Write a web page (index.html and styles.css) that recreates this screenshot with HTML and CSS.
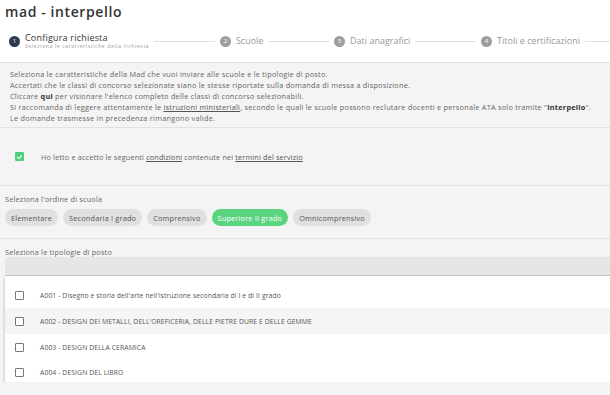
FILE: index.html
```html
<!DOCTYPE html>
<html lang="it">
<head>
    <meta charset="UTF-8">
    <meta name="viewport" content="width=device-width, initial-scale=1.0">
    <title>mad - interpello</title>
    <link rel="stylesheet" href="styles.css">
</head>
<body>
    <header class="top">
        <h1>mad - interpello</h1>

        <div class="stepper">
            <div class="step active">
                <span class="step-num">1</span>
                <div class="step-text">
                    <span class="step-label">Configura richiesta</span>
                    <span class="step-sub">Seleziona le caratteristiche della richiesta</span>
                </div>
            </div>
            <div class="step-line"></div>
            <div class="step">
                <span class="step-num">2</span>
                <span class="step-label">Scuole</span>
            </div>
            <div class="step-line"></div>
            <div class="step">
                <span class="step-num">3</span>
                <span class="step-label">Dati anagrafici</span>
            </div>
            <div class="step-line"></div>
            <div class="step">
                <span class="step-num">4</span>
                <span class="step-label">Titoli e certificazioni</span>
            </div>
            <div class="step-line last"></div>
        </div>
    </header>

    <main class="content">
        <section class="info">
            <p>Seleziona le caratteristiche della Mad che vuoi inviare alle scuole e le tipologie di posto.</p>
            <p>Accertati che le classi di concorso selezionate siano le stesse riportate sulla domanda di messa a disposizione.</p>
            <p>Cliccare <b>qui</b> per visionare l'elenco completo delle classi di concorso selezionabili.</p>
            <p>Si raccomanda di leggere attentamente le <a href="#">istruzioni ministeriali</a>, secondo le quali le scuole possono reclutare docenti e personale ATA solo tramite "<b>Interpello</b>".</p>
            <p>Le domande trasmesse in precedenza rimangono valide.</p>
        </section>

        <section class="terms">
            <span class="check on">
                <svg viewBox="0 0 10 10" width="8" height="8"><path d="M2 5.2 L4.2 7.2 L8 2.9" fill="none" stroke="#fff" stroke-width="1.5" stroke-linecap="round" stroke-linejoin="round"/></svg>
            </span>
            <span class="terms-text">Ho letto e accetto le seguenti <a href="#">condizioni</a> contenute nei <a href="#">termini del servizio</a></span>
        </section>

        <section class="order">
            <div class="label">Seleziona l'ordine di scuola</div>
            <div class="chips">
                <span class="chip">Elementare</span>
                <span class="chip">Secondaria I grado</span>
                <span class="chip">Comprensivo</span>
                <span class="chip selected">Superiore II grado</span>
                <span class="chip">Omnicomprensivo</span>
            </div>
        </section>

        <section class="types">
            <div class="label">Seleziona le tipologie di posto</div>
            <div class="search-bar"></div>
            <ul class="list">
                <li><span class="check"></span>A001 - Disegno e storia dell'arte nell'istruzione secondaria di I e di II grado</li>
                <li class="alt"><span class="check"></span>A002 - DESIGN DEI METALLI, DELL'OREFICERIA, DELLE PIETRE DURE E DELLE GEMME</li>
                <li><span class="check"></span>A003 - DESIGN DELLA CERAMICA</li>
                <li class="cut"><span class="check"></span>A004 - DESIGN DEL LIBRO</li>
            </ul>
        </section>
    </main>
</body>
</html>
```

FILE: styles.css
```css
* {
    box-sizing: border-box;
}

body {
    margin: 0;
    background: #f4f4f4;
    color: #666;
    font-family: "Open Sans", "Liberation Sans", sans-serif;
    overflow: hidden;
}

.top {
    background: #fff;
    padding: 5px 0 0 5px;
    height: 62px;
}

h1 {
    margin: 0;
    font-size: 14px;
    font-weight: 600;
    letter-spacing: 0.6px;
    color: #333;
    line-height: 14px;
}

.stepper {
    display: flex;
    align-items: center;
    margin-top: 14px;
    padding-left: 4px;
}

.step {
    display: flex;
    align-items: center;
    gap: 5px;
}

.step-num {
    width: 11px;
    height: 11px;
    border-radius: 50%;
    background: #9e9e9e;
    color: #fff;
    font-size: 6px;
    display: flex;
    align-items: center;
    justify-content: center;
    flex: none;
}

.step.active .step-num {
    background: #2e3a4e;
}

.step-text {
    display: flex;
    flex-direction: column;
}

.step-label {
    font-size: 9px;
    line-height: 10px;
    color: #999;
}

.step.active .step-label {
    color: #333;
    letter-spacing: 0.2px;
}

.step-sub {
    font-size: 5px;
    line-height: 6px;
    letter-spacing: 0.65px;
    color: #999;
}

.step-line {
    flex: 1;
    height: 1px;
    background: #e0e0e0;
    margin: 0 5px;
}

.step-line.last {
    flex: none;
    width: 25px;
    margin-right: 0;
}

.info {
    border-top: 1px solid #e2e2e2;
    border-bottom: 1px solid #e2e2e2;
    padding: 6px 10px 6px;
    height: 66px;
    font-size: 7.3px;
    line-height: 11px;
    letter-spacing: 0.25px;
}

.info p {
    margin: 0;
    white-space: nowrap;
}

.info b {
    color: #333;
}

.info a,
.terms a {
    color: #555;
}

.terms {
    display: flex;
    align-items: center;
    height: 58px;
    padding-left: 15px;
    border-bottom: 1px solid #e2e2e2;
    font-size: 7.3px;
    letter-spacing: 0.15px;
}

.terms-text {
    margin-left: 17px;
}

.check {
    width: 9px;
    height: 9px;
    border: 1px solid #777;
    border-radius: 1px;
    display: inline-flex;
    align-items: center;
    justify-content: center;
    flex: none;
    background: #fff;
}

.check.on {
    background: #4cd07d;
    border-color: #4cd07d;
}

.label {
    font-size: 7.3px;
    line-height: 10px;
    letter-spacing: 0.2px;
}

.order {
    padding: 8px 5px 12px;
    border-bottom: 1px solid #e2e2e2;
}

.chips {
    display: flex;
    gap: 5px;
    margin-top: 5px;
}

.chip {
    background: #e0e0e0;
    border-radius: 9px;
    height: 17px;
    padding: 0 6px;
    display: flex;
    align-items: center;
    font-size: 7.3px;
    letter-spacing: 0.2px;
    color: #555;
}

.chip.selected {
    background: #5bd37f;
    color: #fff;
}

.types {
    padding: 8px 0 0 5px;
}

.search-bar {
    height: 19px;
    background: #e6e6e6;
    border-bottom: 1px solid #c4c4c4;
}

.list {
    list-style: none;
    margin: 0;
    padding: 6px 0 0;
    background: #fff;
    box-shadow: 0 2px 3px rgba(0, 0, 0, 0.3);
}

.list li {
    display: flex;
    align-items: center;
    height: 26px;
    padding-left: 10px;
    font-size: 6.8px;
    letter-spacing: 0.1px;
    color: #555;
}

.list li .check {
    margin-right: 16px;
}

.list li.alt {
    background: #f5f5f5;
}

.list li.cut {
    height: 22px;
    padding-top: 3px;
}
```
